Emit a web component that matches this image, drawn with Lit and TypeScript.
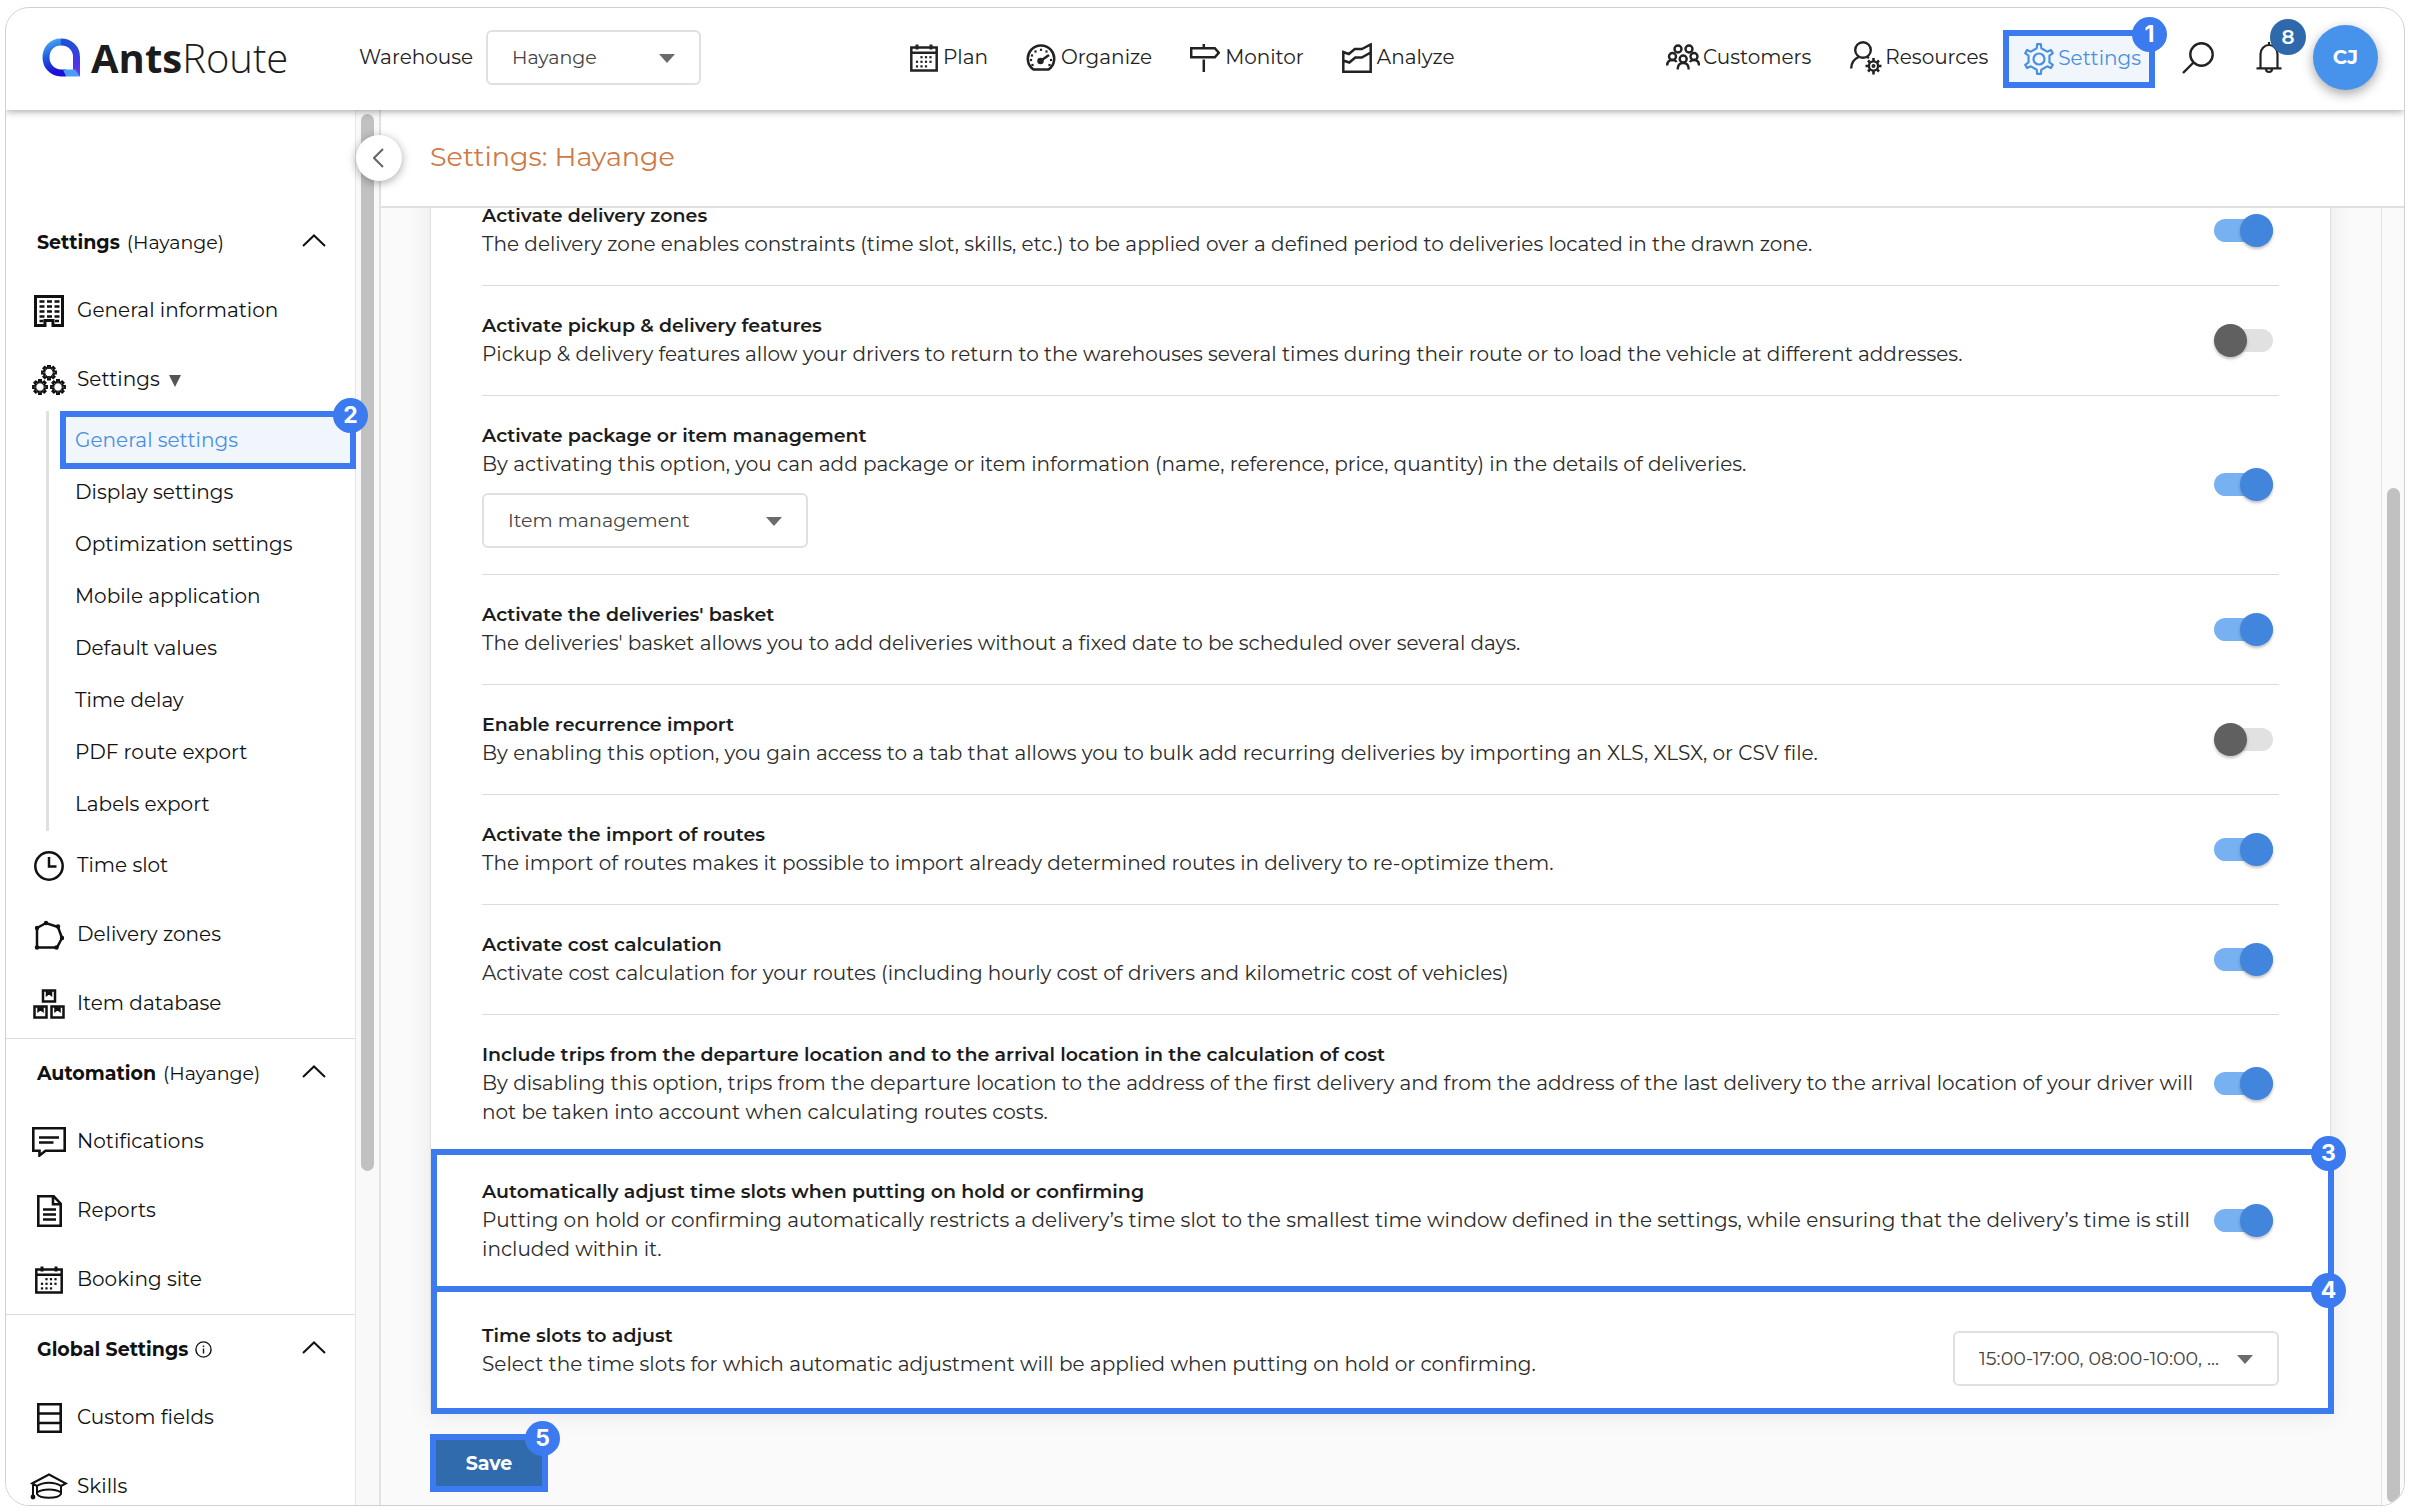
import { LitElement, html, css, svg } from "lit";
import { customElement, property } from "lit/decorators.js";

const FONT = css`"Montserrat", "Inter", "Open Sans", sans-serif`;

const gearPath = (cx: number, cy: number, r: number, depth: number, teeth: number, a = 0.2, b = 0.3) => {
  const pts: string[] = [];
  const step = (Math.PI * 2) / teeth;
  const at = (ang: number, rad: number) =>
    `${(cx + Math.sin(ang) * rad).toFixed(2)} ${(cy - Math.cos(ang) * rad).toFixed(2)}`;
  for (let i = 0; i < teeth; i++) {
    const t = i * step;
    pts.push(at(t - step * b, r - depth), at(t - step * a, r), at(t + step * a, r), at(t + step * b, r - depth));
  }
  return `M${pts.join("L")}Z`;
};

const dots = (list: number[][], s = 2.6) =>
  list.map(([x, y]) => svg`<rect x=${x - s / 2} y=${y - s / 2} width=${s} height=${s} fill="currentColor" stroke="none"/>`);

const box = (x: number, y: number) =>
  svg`<path d="M${x} ${y}h12v11h-12zM${x + 4} ${y}v4l2-1.5 2 1.5v-4"/>`;

const head = (x: number, y: number, r: number) => svg`<circle cx=${x} cy=${y} r=${r}/>`;

const icons: Record<string, { w: number; h: number; sw?: number; body: unknown }> = {
  calendar: {
    w: 28, h: 28,
    body: svg`<path d="M1.3 3.5h25.4v23H1.3zM1.3 8.8h25.4"/><path stroke-width="3" d="M7 .5v5M21 .5v5"/>
      ${dots([[11.5, 13.2], [16, 13.2], [20.5, 13.2], [7, 17.8], [11.5, 17.8], [16, 17.8], [20.5, 17.8], [7, 22.4], [11.5, 22.4], [16, 22.4]], 2.2)}`,
  },
  gauge: {
    w: 30, h: 28,
    body: svg`<path d="M7.5 25.5h15a13.2 13.2 0 1 0-15 0z"/><path stroke-width="2.6" d="M14.5 17l8.5-6"/>
      <circle cx="14.5" cy="17" r="2" fill="currentColor"/>
      ${dots([[5, 16], [6, 11.5], [9.5, 7.5], [15, 5.8], [20.5, 7.5], [25, 16], [6.5, 21], [23.5, 21]], 2.2)}`,
  },
  sign: {
    w: 30, h: 28,
    body: svg`<path d="M1.2 4.2h23.6l4 4.5-4 4.6H1.2zM13.8 0v4M13.8 15.5V28"/>`,
  },
  chart: {
    w: 30, h: 30,
    body: svg`<path d="M1.3 28.7V9l5.5 2 6-5h7l8.9-4.5v27.2zM1.3 17.5l6 2 6-5h6.5l8.9-5"/>`,
  },
  people: {
    w: 34, h: 27, sw: 2.4,
    body: svg`${head(12, 5, 3.5)}${head(23, 5, 3.5)}${head(6.5, 12.5, 3.5)}${head(28, 12.5, 3.5)}${head(17.2, 15, 3.5)}
      <path d="M1.2 21.5c0-3 1.5-5.5 5.3-5.5 2 0 3.5.8 4.2 2M33 21.5c0-3-1.5-5.5-5-5.5-2 0-3.5.8-4.2 2M11.7 25.5c0-4 1.8-6.5 5.5-6.5s5.5 2.5 5.5 6.5"/>`,
  },
  usergear: {
    w: 32, h: 34, sw: 2.4,
    body: svg`<circle cx="13" cy="9" r="7.8"/><path d="M1.2 27.5c0-6 3-9.5 7.5-11.5M17 16l2 1"/>
      <circle cx="23.5" cy="25" r="4.6"/><circle cx="23.5" cy="25" r=".8" fill="currentColor"/>
      <path stroke-width="2.6" d="M23.5 17v3M23.5 30v3.5M15.5 25h3M28.5 25h3M18 19.5l2 2M29 19.5l-2 2M18 30.5l2-2M29 30.5l-2-2"/>`,
  },
  gear: {
    w: 32, h: 32, sw: 2.2,
    body: svg`<path stroke-linejoin="round" d=${gearPath(16, 16, 15, 4, 6, 0.12, 0.2)}/><circle cx="16" cy="16" r="5.5"/>`,
  },
  search: {
    w: 32, h: 32, sw: 2.4,
    body: svg`<circle cx="19.5" cy="12.5" r="11.2"/><path d="M11.5 20.5L1 31"/>`,
  },
  bell: {
    w: 26, h: 33, sw: 2.2,
    body: svg`<path d="M4.5 27V13a8.5 9 0 0 1 17 0v14M.5 27.3h25M13 1v3M10 28a3 3 0 0 0 6 0"/>`,
  },
  building: {
    w: 30, h: 32, sw: 3,
    body: svg`<path d="M1.5 1.5h27v29H19v-5h-8v5H1.5z"/><path stroke-width="2.4" stroke-dasharray="5 2.5" d="M5.5 6.5h20M5.5 11.5h20M5.5 16.5h20M5.5 21.5h20M5.5 26h4M21 26h4"/>`,
  },
  gears: {
    w: 34, h: 30, sw: 2,
    body: svg`${[[17, 7.5], [8, 22], [26, 22]].map(([x, y]) => svg`<path d=${gearPath(x, y, 7, 1.8, 8, 0.18, 0.27)}/><circle cx=${x} cy=${y} r="4.2" stroke-width="1"/>`)}`,
  },
  clock: {
    w: 30, h: 30,
    body: svg`<circle cx="15" cy="15" r="13.7"/><path d="M15 6v9.5h7.5"/>`,
  },
  zone: {
    w: 30, h: 30,
    body: svg`<path d="M3 8l9-5 12 4 4 11-5 9.5H3z"/>${[[3, 8], [12, 3], [24, 6.5], [28, 18], [22.5, 27.5], [3, 27.5]].map(([x, y]) => svg`<circle cx=${x} cy=${y} r="2.2" fill="currentColor" stroke="none"/>`)}`,
  },
  boxes: {
    w: 32, h: 30,
    body: svg`${box(10, 1.5)}${box(1.5, 17.5)}${box(18.5, 17.5)}`,
  },
  message: {
    w: 34, h: 30, sw: 2.6,
    body: svg`<path d="M1.3 1.3h31.4v22.4H13.5l-6 4.8v-4.8H1.3zM7 10.5h20M7 15.5h14.5"/>`,
  },
  doc: {
    w: 25, h: 32, sw: 2.6,
    body: svg`<path d="M1.3 1.3h15.4l7 7.4v22H1.3zM16 1.3v8h7.7M6 14.5h13M6 19.5h13M6 24.5h13"/>`,
  },
  fields: {
    w: 25, h: 30, sw: 2.6,
    body: svg`<path d="M1.3 1.3h22.4v27.4H1.3zM1.3 10.5h22.4M1.3 20h22.4"/>`,
  },
  cap: {
    w: 38, h: 27, sw: 2,
    body: svg`<path d="M2 10.5l17-9 17 9-5 2.5c-6-4.5-18-4.5-24 0zM7 13v8c3 5 21 5 24 0v-8M7 19.5c6-4 18-4 24 0M3 10.5V23"/><circle cx="3" cy="24" r="2.4" fill="currentColor" stroke="none"/>`,
  },
  up: { w: 24, h: 13, sw: 2, body: svg`<path d="M1 12L12 1.5 23 12"/>` },
  left: { w: 12, h: 20, sw: 2, body: svg`<path d="M10 1L1 10l9 9"/>` },
  info: {
    w: 17, h: 17, sw: 1.4,
    body: svg`<circle cx="8.5" cy="8.5" r="7.6"/><path d="M8.5 7.5v5M8.5 4.5v1.5"/>`,
  },
  caret: { w: 16, h: 9, body: svg`<path d="M0 0h16l-8 9z" fill="currentColor" stroke="none"/>` },
  down: { w: 12, h: 12, body: svg`<path d="M0 0h12L6 12z" fill="#555" stroke="none"/>` },
};

const icon = (name: string) => {
  const i = icons[name];
  return html`<svg width=${i.w} height=${i.h} viewBox="0 0 ${i.w} ${i.h}" fill="none" stroke="currentColor"
    stroke-width=${i.sw ?? 2.5} aria-hidden="true">${i.body}</svg>`;
};

const shared = css`
  * { box-sizing: border-box; }
  svg { display: block; flex: none; }
  a { color: inherit; text-decoration: none; }
  button { font: inherit; color: inherit; border: 0; background: none; padding: 0; cursor: pointer; }
`;

@customElement("step-badge")
class StepBadge extends LitElement {
  static styles = css`
    :host {
      position: absolute; top: -19px; right: -18px; z-index: 3;
      width: 35px; height: 35px; border-radius: 50%;
      display: grid; place-items: center;
      background: #3b7bef; color: #fff;
      font: 700 23px/1 "Inter", sans-serif;
    }
  `;
  render() { return html`<slot></slot>`; }
}

@customElement("drop-down")
class DropDown extends LitElement {
  @property() label = "";
  @property() value = "";
  static styles = [shared, css`
    :host { display: block; }
    .wrap { position: relative; color: #6b6b6b; }
    select {
      display: block; width: 100%; height: 55px; appearance: none;
      border: 2px solid #e0e0e0; border-radius: 6px; background: #fff;
      padding: 0 44px 0 24px; font: 400 19px/29px ${FONT}; color: #444;
    }
    svg { position: absolute; right: 26px; top: 24px; pointer-events: none; }
  `];
  render() {
    return html`<div class="wrap">
      <select aria-label=${this.label}><option>${this.value}</option></select>${icon("caret")}
    </div>`;
  }
}

@customElement("top-bar")
class TopBar extends LitElement {
  static styles = [shared, css`
    :host {
      display: flex; align-items: center; height: 102px; flex: none;
      padding: 0 26px 3px 36px; background: #fff; position: relative; z-index: 4;
      box-shadow: 0 1px 8px rgba(0, 0, 0, .4);
      font: 400 20px/29px ${FONT}; color: #222;
    }
    .logo { display: flex; align-items: center; gap: 10px; width: 317px; color: #1c1c1c; }
    .word { font: 300 40px/48px "Open Sans", "Noto Sans", sans-serif; }
    .word b { font-weight: 700; }
    .warehouse { width: 127px; }
    drop-down { width: 215px; }
    nav { display: flex; align-items: center; gap: 38px; }
    .main { margin-left: 209px; }
    .side { margin-left: auto; gap: 39px; }
    nav a { display: flex; align-items: center; gap: 5px; }
    .side a { gap: 3px; }
    .active {
      position: relative; height: 58px; padding: 0 8px 0 14px; margin: 2px -12px 0 -24px;
      border: 6px solid #3b7bef; background: #f1f6fd; color: #4a90e2;
    }
    .bell { position: relative; margin-left: 3px; }
    .count {
      position: absolute; left: 14px; top: -22px; width: 36px; height: 36px; border-radius: 50%;
      display: grid; place-items: center; background: #2f69ab; color: #fff; font-weight: 600;
    }
    .avatar {
      width: 65px; height: 65px; border-radius: 50%; background: #4793ec; color: #fff;
      font-weight: 700; margin-left: -8px; box-shadow: 0 4px 12px rgba(0, 0, 0, .35);
    }
  `];
  render() {
    const main = [["calendar", "Plan"], ["gauge", "Organize"], ["sign", "Monitor"], ["chart", "Analyze"]];
    return html`
      <a class="logo" href="#">
        <svg width="39" height="40" viewBox="0 0 39 40" fill="none">
          <defs>
            <linearGradient id="l" x1="0" y1="0" x2="0.3" y2="1"><stop offset="0" stop-color="#48a8f5"/><stop offset=".5" stop-color="#1f55e0"/><stop offset="1" stop-color="#1a10d8"/></linearGradient>
            <linearGradient id="r" x1="0" y1="0" x2="0" y2="1"><stop offset="0" stop-color="#2150d8"/><stop offset=".6" stop-color="#4a35e8"/><stop offset="1" stop-color="#6a3df0"/></linearGradient>
          </defs>
          <path d="M19 4C9.5 4 4 11 4 19.5S10.5 35 19 35h5" stroke="url(#l)" stroke-width="7"/>
          <path d="M19 4c9 0 15.5 6.5 15.5 15V38" stroke="url(#r)" stroke-width="7"/>
          <path d="M21 31.5h12l5 7H24z" fill="#4a9cf5"/>
        </svg>
        <span class="word"><b>Ants</b>Route</span>
      </a>
      <span class="warehouse">Warehouse</span>
      <drop-down label="Warehouse" value="Hayange"></drop-down>
      <nav class="main" aria-label="Main">${main.map(([i, t]) => html`<a href="#">${icon(i)}${t}</a>`)}</nav>
      <nav class="side" aria-label="Account">
        <a href="#">${icon("people")}Customers</a>
        <a href="#">${icon("usergear")}Resources</a>
        <a href="#" class="active">${icon("gear")}Settings<step-badge>1</step-badge></a>
        <button aria-label="Search">${icon("search")}</button>
        <button class="bell" aria-label="Alerts">${icon("bell")}<span class="count">8</span></button>
        <button class="avatar">CJ</button>
      </nav>`;
  }
}

@customElement("side-menu")
class SideMenu extends LitElement {
  static styles = [shared, css`
    :host {
      display: flex; flex: none; width: 375px; background: #fff; border-right: 2px solid #e2e2e2;
      font: 400 20px/29px ${FONT}; color: #111;
    }
    .menu { flex: 1; padding-top: 98px; }
    .track { width: 24px; flex: none; padding: 4px 4px 0 5px; background: #f9f9f9; border-left: 1px solid #e6e6e6; }
    .thumb { width: 13px; height: 76%; border-radius: 7px; background: #c1c1c1; }
    section + section { border-top: 1px solid #dcdcdc; }
    .head { display: flex; align-items: center; height: 68px; width: 100%; padding: 0 29px 0 31px; gap: 7px; font-size: 19px; }
    .head svg:last-child { margin-left: auto; margin-bottom: 4px; }
    .item { display: flex; align-items: center; height: 69px; padding-left: 24px; gap: 9px; }
    .glyph { width: 38px; display: grid; place-items: center; }
    .sub { margin-left: 40px; padding: 0 0 1px 26px; border-left: 3px solid #e0e0e0; }
    .sub a { display: flex; align-items: center; height: 52px; }
    .sub .current {
      position: relative; height: 58px; margin: -3px -1px -3px -15px; padding-left: 9px;
      border: 6px solid #3b7bef; background: #f1f6fd; color: #4a90e2;
    }
    .down { padding-top: 3px; }
  `];
  private head(title: string, extra: unknown) {
    return html`<button class="head"><b>${title}</b>${extra}${icon("up")}</button>`;
  }
  private item(glyph: string, text: string, extra: unknown = "") {
    return html`<a class="item" href="#"><span class="glyph">${icon(glyph)}</span><span>${text}</span>${extra}</a>`;
  }
  render() {
    const sub = ["Display settings", "Optimization settings", "Mobile application", "Default values", "Time delay", "PDF route export", "Labels export"];
    return html`
      <nav class="menu" aria-label="Settings">
        <section>
          ${this.head("Settings", html`<span>(Hayange)</span>`)}
          ${this.item("building", "General information")}
          ${this.item("gears", "Settings", html`<span class="down">${icon("down")}</span>`)}
          <div class="sub">
            <a class="current" href="#">General settings<step-badge>2</step-badge></a>
            ${sub.map((t) => html`<a href="#">${t}</a>`)}
          </div>
          ${this.item("clock", "Time slot")}
          ${this.item("zone", "Delivery zones")}
          ${this.item("boxes", "Item database")}
        </section>
        <section>
          ${this.head("Automation", html`<span>(Hayange)</span>`)}
          ${this.item("message", "Notifications")}
          ${this.item("doc", "Reports")}
          ${this.item("calendar", "Booking site")}
        </section>
        <section>
          ${this.head("Global Settings", icon("info"))}
          ${this.item("fields", "Custom fields")}
          ${this.item("cap", "Skills")}
        </section>
      </nav>
      <div class="track"><div class="thumb"></div></div>`;
  }
}

interface Setting { title: string; text: string; on: boolean; choice?: string; step?: number; }

const settings: Setting[] = [
  { title: "Activate delivery zones", text: "The delivery zone enables constraints (time slot, skills, etc.) to be applied over a defined period to deliveries located in the drawn zone.", on: true },
  { title: "Activate pickup & delivery features", text: "Pickup & delivery features allow your drivers to return to the warehouses several times during their route or to load the vehicle at different addresses.", on: false },
  { title: "Activate package or item management", text: "By activating this option, you can add package or item information (name, reference, price, quantity) in the details of deliveries.", on: true, choice: "Item management" },
  { title: "Activate the deliveries' basket", text: "The deliveries' basket allows you to add deliveries without a fixed date to be scheduled over several days.", on: true },
  { title: "Enable recurrence import", text: "By enabling this option, you gain access to a tab that allows you to bulk add recurring deliveries by importing an XLS, XLSX, or CSV file.", on: false },
  { title: "Activate the import of routes", text: "The import of routes makes it possible to import already determined routes in delivery to re-optimize them.", on: true },
  { title: "Activate cost calculation", text: "Activate cost calculation for your routes (including hourly cost of drivers and kilometric cost of vehicles)", on: true },
  { title: "Include trips from the departure location and to the arrival location in the calculation of cost", text: "By disabling this option, trips from the departure location to the address of the first delivery and from the address of the last delivery to the arrival location of your driver will not be taken into account when calculating routes costs.", on: true },
  { title: "Automatically adjust time slots when putting on hold or confirming", text: "Putting on hold or confirming automatically restricts a delivery’s time slot to the smallest time window defined in the settings, while ensuring that the delivery’s time is still included within it.", on: true, step: 3 },
];

@customElement("settings-panel")
class SettingsPanel extends LitElement {
  static styles = [shared, css`
    :host {
      display: flex; flex-direction: column; flex: 1; min-width: 0;
      font: 400 20px/29px ${FONT}; color: #2b2b2b;
    }
    .bar {
      position: relative; z-index: 2; display: flex; align-items: center; flex: none; height: 98px;
      padding: 0 0 2px 49px; background: #fff; border-bottom: 2px solid #e0e0e0;
    }
    h1 { margin: 0; font-size: 27px; line-height: 36px; font-weight: 400; color: #cd7a45; }
    .collapse {
      position: absolute; left: -25px; top: 25px; width: 46px; height: 46px; border-radius: 50%;
      display: grid; place-items: center; background: #fff; color: #666; box-shadow: 0 2px 10px rgba(0, 0, 0, .35);
    }
    .view { flex: 1; min-height: 0; display: flex; overflow: hidden; background: #fafafa; }
    .content { flex: 1; min-width: 0; padding: 0 50px 0 49px; }
    .card {
      margin-top: -33px; padding: 0 51px; background: #fff; border: 1px solid #e0e0e0;
      box-shadow: 0 2px 24px rgba(0, 0, 0, .08);
    }
    .row { display: flex; align-items: center; padding: 25px 0 26px; border-bottom: 1px solid #dcdcdc; }
    .copy { flex: 1; min-width: 0; }
    .title { display: block; font-size: 19px; font-weight: 600; color: #1c1c1c; }
    p { margin: 0; }
    .copy drop-down { width: 326px; margin-top: 14px; }
    .switch {
      appearance: none; flex: none; width: 59px; height: 23px; border-radius: 12px; margin: 0 6px 0 12px;
      display: flex; align-items: center; background: #e1e1e1;
    }
    .switch::before {
      content: ""; flex: none; width: 33px; height: 33px; border-radius: 50%; background: #606060;
      box-shadow: 0 2px 3px rgba(0, 0, 0, .25);
    }
    .switch:checked { justify-content: flex-end; background: #77b1f1; }
    .switch:checked::before { background: #4185dd; }
    .marked { position: relative; padding: 23px 0 25px; }
    .frame { position: absolute; inset: -5px -55px -3px -51px; border: 6px solid #3b7bef; pointer-events: none; }
    .slots { align-items: flex-start; padding: 31px 0 25px; border-bottom: 0; }
    .slots drop-down { width: 326px; margin-top: 10px; }
    .slots .frame { top: -4px; }
    .save {
      position: relative; display: block; width: 118px; height: 58px; margin-top: 22px;
      border: 6px solid #3b7bef; background: #2f6bad; color: #fff; font-size: 19px; font-weight: 700;
    }
    .track { width: 23px; flex: none; padding: 280px 4px 2px 5px; background: #fafafa; border-left: 1px solid #e4e4e4; }
    .thumb { width: 13px; height: 100%; border-radius: 7px; background: #c1c1c1; }
  `];
  render() {
    return html`
      <header class="bar">
        <button class="collapse" aria-label="Collapse menu">${icon("left")}</button>
        <h1>Settings: Hayange</h1>
      </header>
      <div class="view">
        <main class="content">
          <div class="card">
            ${settings.map((s, i) => html`
              <div class="row ${s.step ? "marked" : ""}">
                <div class="copy">
                  <label class="title" for="s${i}">${s.title}</label>
                  <p>${s.text}</p>
                  ${s.choice ? html`<drop-down label=${s.title} value=${s.choice}></drop-down>` : ""}
                </div>
                <input class="switch" id="s${i}" type="checkbox" role="switch" .checked=${s.on}>
                ${s.step ? html`<div class="frame"><step-badge>${s.step}</step-badge></div>` : ""}
              </div>`)}
            <div class="row marked slots">
              <div class="copy">
                <span class="title">Time slots to adjust</span>
                <p>Select the time slots for which automatic adjustment will be applied when putting on hold or confirming.</p>
              </div>
              <drop-down label="Time slots to adjust" value="15:00-17:00, 08:00-10:00, ..."></drop-down>
              <div class="frame"><step-badge>4</step-badge></div>
            </div>
          </div>
          <button class="save">Save<step-badge>5</step-badge></button>
        </main>
        <div class="track"><div class="thumb"></div></div>
      </div>`;
  }
}

@customElement("app-root")
class AppRoot extends LitElement {
  static styles = [shared, css`
    :host { display: block; height: 100vh; padding: 7px 5px 6px; background: #fff; box-sizing: border-box; }
    .app {
      height: 100%; display: flex; flex-direction: column; overflow: hidden;
      border: 1px solid #d0d0d0; border-radius: 24px; background: #fff;
    }
    .body { flex: 1; min-height: 0; display: flex; }
    settings-panel { position: relative; z-index: 2; }
    side-menu { position: relative; z-index: 1; }
  `];
  render() {
    return html`<div class="app">
      <top-bar></top-bar>
      <div class="body"><side-menu></side-menu><settings-panel></settings-panel></div>
    </div>`;
  }
}
